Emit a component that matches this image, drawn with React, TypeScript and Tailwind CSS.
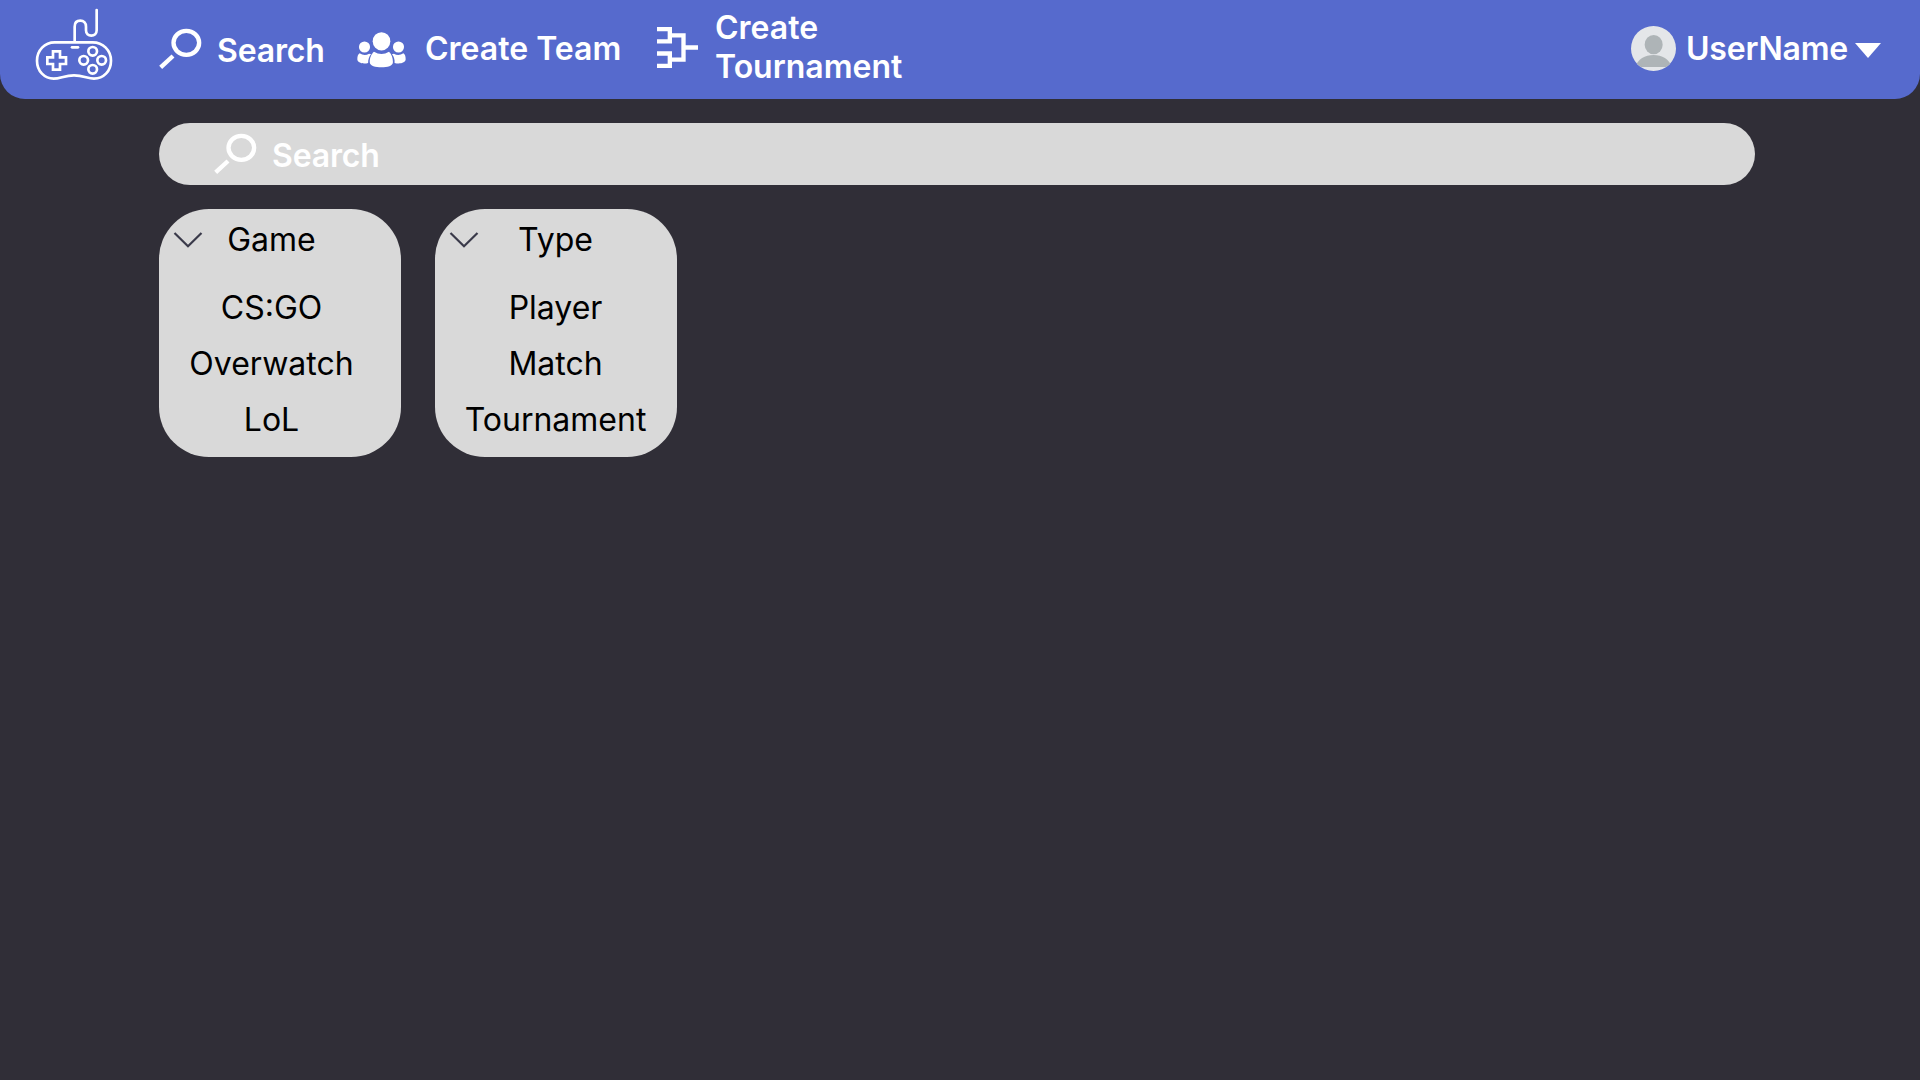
import React from "react";

function ControllerLogo() {
  return (
    <svg className="ml-5 h-[99px] w-[110px] shrink-0" viewBox="0 0 330 297" fill="none" stroke="#fff" strokeWidth="8" strokeLinecap="round" strokeLinejoin="round">
      <path d="M164 125V80C164 68 171 62 181 62C191 62 198 69 198 80V91C198 101 205 107 214 107C223 107 230 101 230 91V30" />
      <path d="M104 127H218C249 127 273 151 273 182C273 214 250 236 222 236C203 236 190 226 162 226C134 226 121 236 101 236C74 236 51 214 51 182C51 151 74 127 104 127Z" />
      <path d="M156 142H174" />
      <path strokeLinejoin="miter" d="M99 154H120V172H138V192H120V209H99V192H82V172H99Z" />
      <circle cx="218" cy="154" r="13" />
      <circle cx="191" cy="181" r="13" />
      <circle cx="245" cy="181" r="13" />
      <circle cx="218" cy="208" r="13" />
    </svg>
  );
}

function SearchIcon() {
  return (
    <svg className="h-[42px] w-[44px] shrink-0" viewBox="0 0 132 126" fill="none" stroke="#fff" strokeWidth="13">
      <ellipse cx="85" cy="47.500" rx="38.500" ry="36" />
      <path d="M45 87L8 121" />
    </svg>
  );
}

function TeamIcon() {
  return (
    <svg className="h-9 w-[49px] shrink-0" viewBox="0 0 150 108" preserveAspectRatio="none" fill="#fff">
      <ellipse cx="75" cy="28" rx="27" ry="27.5" />
      <path d="M52 59Q75 73 98 59C106 65 110 78 110 90C110 102 93 106 75 106C57 106 39 102 39 90C39 78 44 65 52 59Z" />
      <ellipse cx="23" cy="45" rx="17" ry="16.500" />
      <ellipse cx="127" cy="45" rx="17" ry="16.500" />
      <path d="M8 64Q23 73 37 65L43 67C37 74 34 83 34 93C19 97 1 93 1 82C1 74 3 67 8 64Z" />
      <path d="M142 64Q127 73 113 65L107 67C113 74 116 83 115 93C131 97 149 93 149 82C149 74 147 67 142 64Z" />
    </svg>
  );
}

function BracketIcon() {
  return (
    <svg className="h-[41px] w-[41px] shrink-0" viewBox="0 0 123 123" fill="none" stroke="#fff" strokeWidth="13">
      <path d="M0 6.500H38.500V43H0M0 79.500H38.500V116.500H0M38.500 25H79.500V98H38.500M79.500 61.500H123" />
    </svg>
  );
}

function Avatar() {
  return (
    <svg className="h-[45px] w-[45px] shrink-0" viewBox="0 0 135 135">
      <defs>
        <clipPath id="avatar-clip">
          <circle cx="67.500" cy="67.500" r="67.500" />
        </clipPath>
      </defs>
      <g clipPath="url(#avatar-clip)">
        <rect width="135" height="135" fill="#E4E6E9" />
        <ellipse cx="68" cy="56" rx="27" ry="29" fill="#AEB4B7" />
        <path d="M12 123C20 100 42 87 67.500 87C93 87 115 100 123 123Z" fill="#AEB4B7" />
      </g>
    </svg>
  );
}

function FilterCard({ title, options, inset }: { title: string; options: string[]; inset: string }) {
  return (
    <section className="h-[248px] w-[242px] rounded-[50px] bg-[#d9d9d9] pt-[11px] text-center text-black">
      <div className="flex items-start">
        <svg className="mt-[11px] ml-[14px] h-[18px] w-[30px] shrink-0" viewBox="0 0 30 18" fill="none" stroke="#3a3a4a" strokeWidth="2.200">
          <path d="M1.500 2L15 15.300L28.500 2" />
        </svg>
        <h2 className={`-ml-11 flex-1 ${inset}`}>{title}</h2>
      </div>
      <ul className={`mt-[29px] flex flex-col gap-[17px] ${inset}`}>
        {options.map((option) => (
          <li key={option}>{option}</li>
        ))}
      </ul>
    </section>
  );
}

export default function App() {
  return (
    <div className="min-h-screen bg-[#302e37] font-['Inter',sans-serif] text-[32px] leading-[39px] text-white">
      <header className="flex h-[99px] items-start rounded-b-[25px] bg-[#566acd] font-semibold">
        <ControllerLogo />
        <nav className="flex items-start">
          <a className="ml-7 flex pt-[27px]">
            <SearchIcon />
            <span className="mt-1 ml-[15px] w-[108px] tracking-[-0.15px]">Search</span>
          </a>
          <a className="ml-8 flex pt-[29px]">
            <span className="mt-[3px]"><TeamIcon /></span>
            <span className="ml-[19px] w-[196px] whitespace-nowrap">Create Team</span>
          </a>
          <a className="ml-9 flex pt-2">
            <span className="mt-[19px]"><BracketIcon /></span>
            <span className="ml-[17px]">Create<br />Tournament</span>
          </a>
        </nav>
        <button className="mr-[39px] ml-auto flex pt-[26px]">
          <Avatar />
          <span className="mt-[3px] ml-[10px] w-[162px] text-left tracking-[-0.2px]">UserName</span>
          <svg className="mt-[17px] ml-[7px] h-[15px] w-[26px]" viewBox="0 0 26 15" fill="#fff">
            <path d="M0 0H26L13 15Z" />
          </svg>
        </button>
      </header>
      <main className="pt-6 pl-[159px]">
        <div className="flex h-[62px] w-[1596px] rounded-full bg-[#d9d9d9] pt-[9px] pl-[54px] font-semibold">
          <SearchIcon />
          <span className="mt-1 ml-[15px] tracking-[-0.15px]">Search</span>
        </div>
        <div className="mt-6 flex gap-[34px]">
          <FilterCard title="Game" options={["CS:GO", "Overwatch", "LoL"]} inset="pr-[17px]" />
          <FilterCard title="Type" options={["Player", "Match", "Tournament"]} inset="pr-px" />
        </div>
      </main>
    </div>
  );
}
